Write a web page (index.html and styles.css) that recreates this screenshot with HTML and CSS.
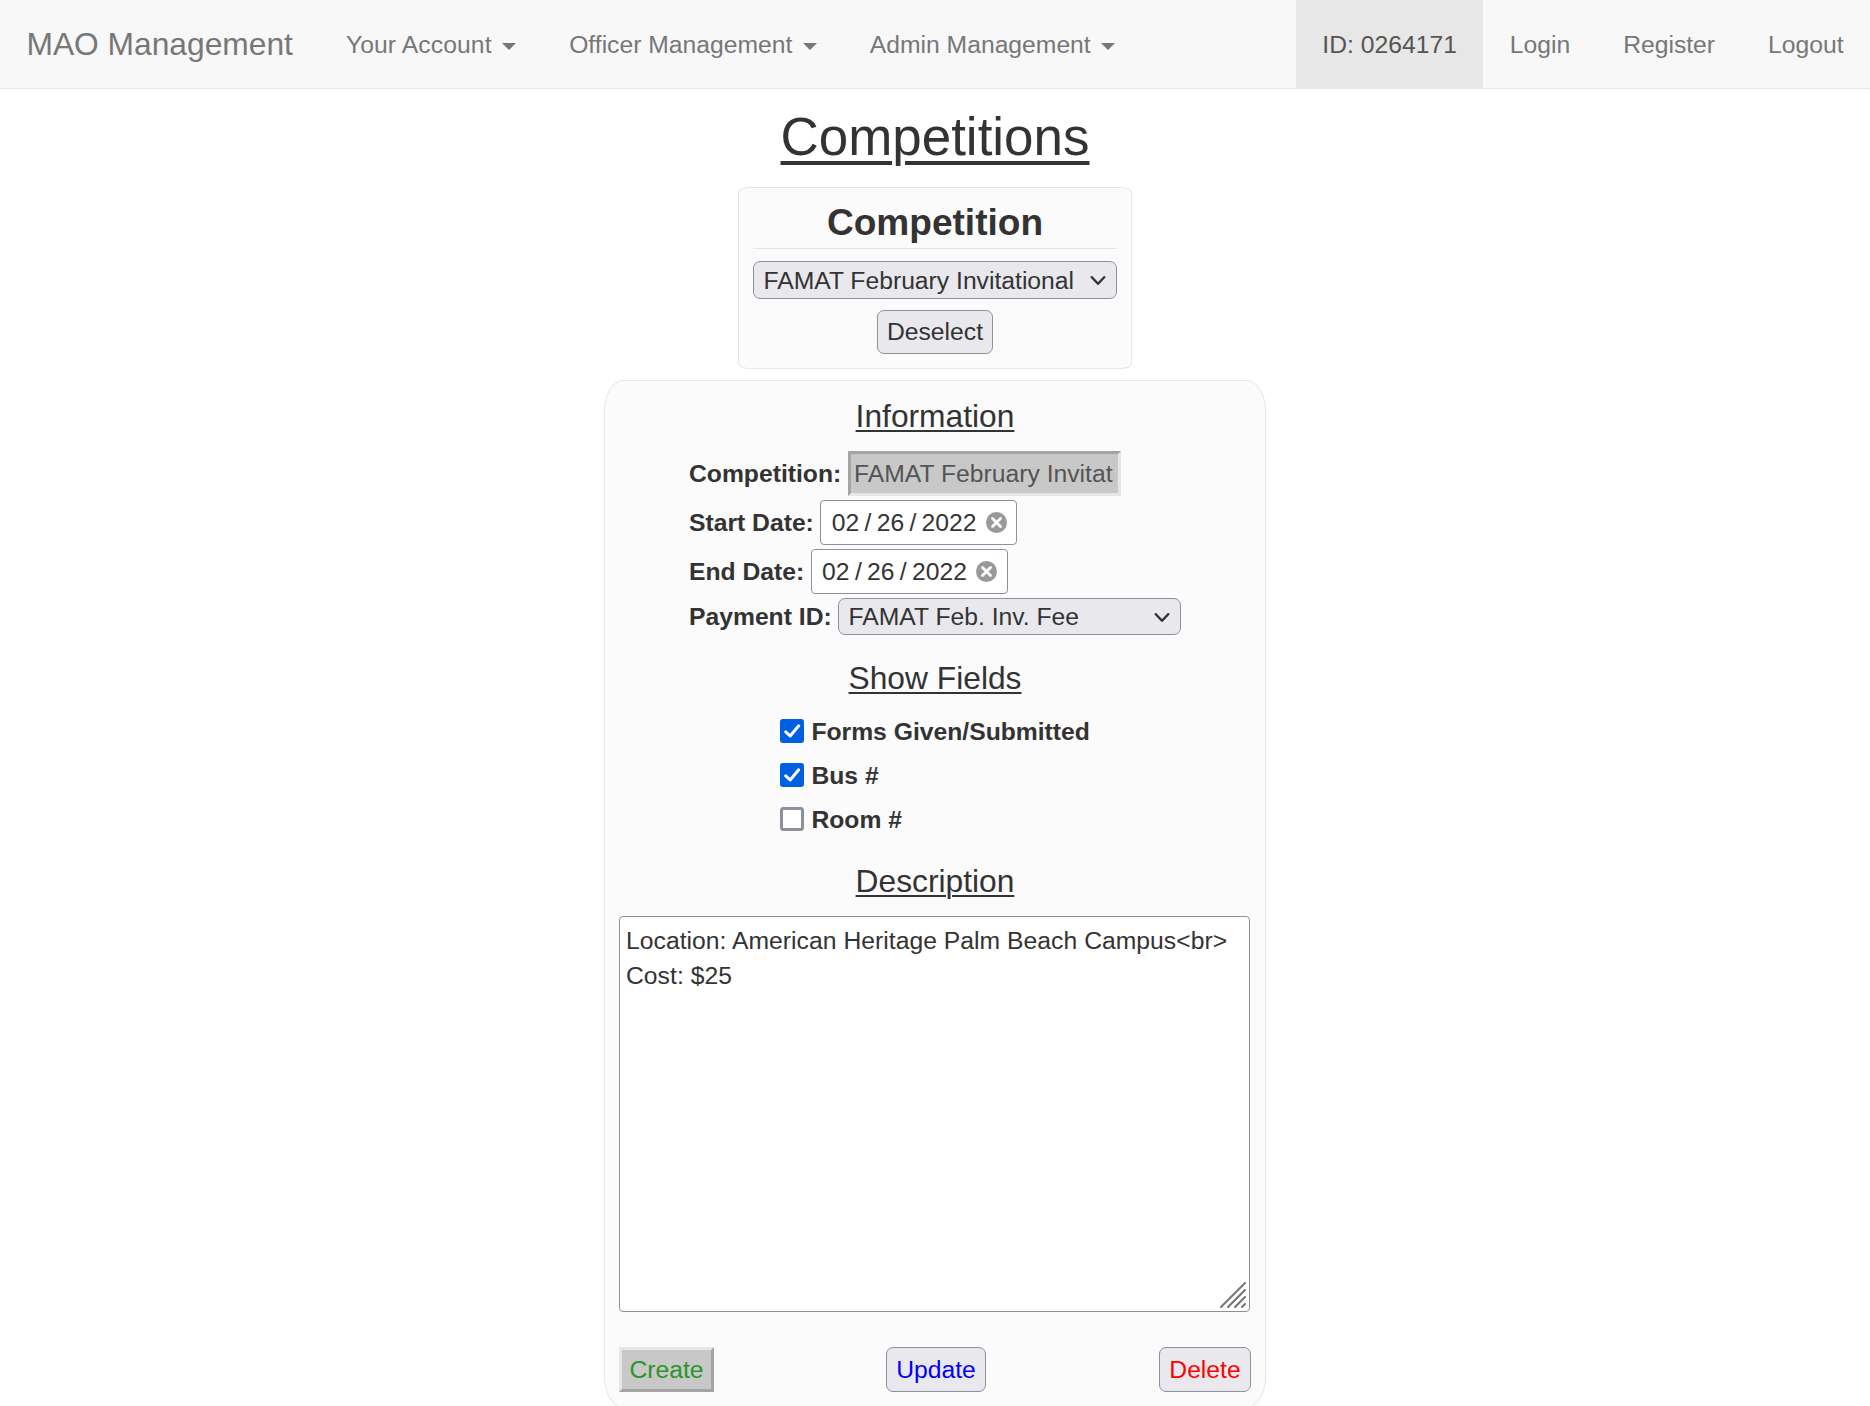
FILE: index.html
```html
<!DOCTYPE html>
<html lang="en">
<head>
<meta charset="utf-8">
<title>MAO Management</title>
<link rel="stylesheet" href="styles.css">
</head>
<body>
<nav class="navbar">
  <a class="brand">MAO Management</a>
  <a class="nav-link account">Your Account <b class="caret"></b></a>
  <a class="nav-link">Officer Management <b class="caret"></b></a>
  <a class="nav-link">Admin Management <b class="caret"></b></a>
  <div class="nav-right">
    <a class="nav-link active">ID: 0264171</a>
    <a class="nav-link">Login</a>
    <a class="nav-link">Register</a>
    <a class="nav-link">Logout</a>
  </div>
</nav>
<main class="page">
  <h1 class="page-title">Competitions</h1>
  <section class="picker">
    <h2 class="picker-title">Competition</h2>
    <div class="select">
      <select class="select-field"><option>FAMAT February Invitational</option></select>
      <svg class="chevron" viewBox="0 0 16 10"><path d="M1.8 1.2 L8 7.8 L14.2 1.2"/></svg>
    </div>
    <button class="btn">Deselect</button>
  </section>
  <form class="details">
    <h3 class="section-title">Information</h3>
    <div class="fields">
      <div class="field"><label>Competition:</label><input class="locked-input" type="text" value="FAMAT February Invitational" disabled></div>
      <div class="field"><label>Start Date:</label>
        <div class="date"><span>02</span><span>/</span><span>26</span><span>/</span><span>2022</span>
          <svg class="clear" viewBox="0 0 21 21"><circle cx="10.5" cy="10.5" r="10.5"/><path d="M6.5 6.5 L14.5 14.5 M14.5 6.5 L6.5 14.5"/></svg></div></div>
      <div class="field"><label>End Date:</label>
        <div class="date"><span>02</span><span>/</span><span>26</span><span>/</span><span>2022</span>
          <svg class="clear" viewBox="0 0 21 21"><circle cx="10.5" cy="10.5" r="10.5"/><path d="M6.5 6.5 L14.5 14.5 M14.5 6.5 L6.5 14.5"/></svg></div></div>
      <div class="field field-short"><label>Payment ID:</label>
        <div class="select payment">
          <select class="select-field"><option>FAMAT Feb. Inv. Fee</option></select>
          <svg class="chevron" viewBox="0 0 16 10"><path d="M1.8 1.2 L8 7.8 L14.2 1.2"/></svg>
        </div></div>
    </div>
    <h3 class="section-title title-show">Show Fields</h3>
    <div class="checks">
      <label class="check"><svg class="box" viewBox="0 0 24 24"><rect class="on" width="24" height="24" rx="3"/><path d="M5.7 12.8 L10.2 17 L18.7 6.8"/></svg><span>Forms Given/Submitted</span></label>
      <label class="check"><svg class="box" viewBox="0 0 24 24"><rect class="on" width="24" height="24" rx="3"/><path d="M5.7 12.8 L10.2 17 L18.7 6.8"/></svg><span>Bus #</span></label>
      <label class="check"><svg class="box" viewBox="0 0 24 24"><rect class="off" x="1.5" y="1.5" width="21" height="21" rx="2"/></svg><span>Room #</span></label>
    </div>
    <h3 class="section-title title-description">Description</h3>
    <div class="description">
      <textarea class="description-text" spellcheck="false">Location: American Heritage Palm Beach Campus&lt;br&gt;
Cost: $25</textarea>
      <svg class="grip" viewBox="0 0 26 26"><path d="M1 25 L25 1 M8 25 L25 8 M15 25 L25 15 M22 25 L25 22"/></svg>
    </div>
    <div class="actions">
      <button class="btn create" type="button" disabled>Create</button>
      <button class="btn update" type="button">Update</button>
      <button class="btn delete" type="button">Delete</button>
    </div>
  </form>
</main>
</body>
</html>
```
FILE: styles.css
```css
* { box-sizing: border-box; }

body {
  margin: 0;
  height: 1406px;
  overflow: hidden;
  background: #fff;
  color: #333;
  font: 24.7px/35.3px "Liberation Sans", Arial, sans-serif;
}

h1, h2, h3 { margin: 0; font-weight: normal; }
button, input, select, textarea { font: inherit; color: inherit; margin: 0; }

.navbar {
  display: flex;
  height: 89px;
  background: #f8f8f8;
  border-bottom: 1px solid #e7e7e7;
  color: #777;
}
.brand { padding: 27.4px 26.47px 0; font-size: 31.76px; }
.nav-link { padding: 27.4px 26.47px 0; white-space: nowrap; }
.account { letter-spacing: 0.1px; }
.nav-right { display: flex; margin-left: auto; }
.active { background: #e7e7e7; color: #555; }
.caret {
  display: inline-block;
  margin-left: 3.6px;
  vertical-align: middle;
  border-top: 7px solid;
  border-left: 7px solid transparent;
  border-right: 7px solid transparent;
}

.page { display: flex; flex-direction: column; align-items: center; }
.page-title {
  margin: 19px 0 21px;
  font-size: 52.94px;
  line-height: 58px;
  text-decoration: underline 4px;
  text-underline-offset: 6px;
}

.picker {
  display: flex;
  flex-direction: column;
  align-items: center;
  width: 394px;
  height: 182px;
  padding: 8px 14px 0;
  background: #fbfbfb;
  border: 1px solid #e7e7e7;
  border-radius: 3%;
}
.picker-title {
  align-self: stretch;
  height: 53px;
  margin-bottom: 12px;
  border-bottom: 1px solid #e5e5e5;
  text-align: center;
  font-size: 37.06px;
  font-weight: bold;
  line-height: 53px;
}

.select {
  position: relative;
  width: 364px;
  height: 38px;
}
.select-field {
  display: block;
  appearance: none;
  width: 100%;
  height: 100%;
  padding: 1px 10px 0 9.5px;
  border: 1px solid #8f8f9d;
  border-radius: 7px;
  background: #e9e9ed;
  line-height: 34px;
}
.chevron {
  position: absolute;
  right: 11px;
  top: 15px;
  width: 16px;
  height: 10px;
  fill: none;
  stroke: #333;
  stroke-width: 2.4;
  stroke-linecap: round;
  stroke-linejoin: round;
}
.picker .btn { width: 116px; margin-top: 11px; }

.btn {
  height: 44px;
  padding: 0;
  border: 1px solid #8f8f9d;
  border-radius: 7px;
  background: #e9e9ed;
}

.details {
  width: 662px;
  height: 1028px;
  margin-top: 11px;
  padding: 16px 14px 0;
  background: #fbfbfb;
  border: 1px solid #e7e7e7;
  border-radius: 3%;
}
.section-title {
  height: 38px;
  text-align: center;
  font-size: 31.76px;
  line-height: 38px;
  text-decoration: underline 2px;
  text-underline-offset: 3px;
}

.fields { margin: 14px 0 0 70px; }
.field { display: flex; align-items: center; gap: 6.4px; height: 49px; font-weight: bold; }
.field > :not(label) { font-weight: normal; }
.field-short { height: 39px; padding-top: 2px; }
.locked-input {
  width: 273px;
  height: 45px;
  padding: 0 4px 0 3.5px;
  border: 3px solid;
  border-color: #a4a4a4 #e6e6e6 #e6e6e6 #a4a4a4;
  background: #c8c8c8;
  color: #545454;
}
.date {
  display: flex;
  align-items: center;
  gap: 5.3px;
  width: 197px;
  height: 45px;
  padding-left: 10.5px;
  background: #fff;
  border: 1px solid #8f8f9d;
  border-radius: 4px;
}
.clear { width: 21px; height: 21px; margin-left: 4px; fill: #999; }
.clear path { stroke: #fff; stroke-width: 2.8; stroke-linecap: round; }
.payment { width: 343px; height: 37px; }

.title-show { margin-top: 24px; }
.checks { margin: 12px 0 0 161px; }
.check { display: flex; align-items: center; gap: 7.4px; height: 44px; font-weight: bold; }
.check span { padding-top: 2px; }
.box { width: 24px; height: 24px; fill: none; }
.box path { stroke: #fff; stroke-width: 3; stroke-linecap: round; stroke-linejoin: round; }
.on { fill: #0060df; }
.off { fill: #fff; stroke: #8f8f9d; stroke-width: 3; }

.title-description { margin-top: 21px; }
.description { position: relative; height: 396px; margin-top: 16px; }
.description-text {
  display: block;
  width: 631px;
  height: 100%;
  padding: 6px 6px 5px;
  border: 1px solid #8f8f9d;
  border-radius: 4px;
  background: #fff;
  letter-spacing: 0.03px;
  resize: none;
  overflow: hidden;
}
.grip {
  position: absolute;
  right: 5.5px;
  bottom: 4.5px;
  width: 26px;
  height: 26px;
  fill: none;
  stroke: #747474;
  stroke-width: 2;
  stroke-linecap: round;
}

.actions { display: flex; justify-content: space-between; margin-top: 35px; }
.actions .btn { height: 45px; }
.actions .create {
  width: 95px;
  border: 3px solid;
  border-color: #e6e6e6 #a4a4a4 #a4a4a4 #e6e6e6;
  border-radius: 0;
  background: #c8c8c8;
  color: #279627;
}
.update { width: 100px; margin-right: 1px; color: #00f; }
.delete { width: 92px; color: #f00; }
```
